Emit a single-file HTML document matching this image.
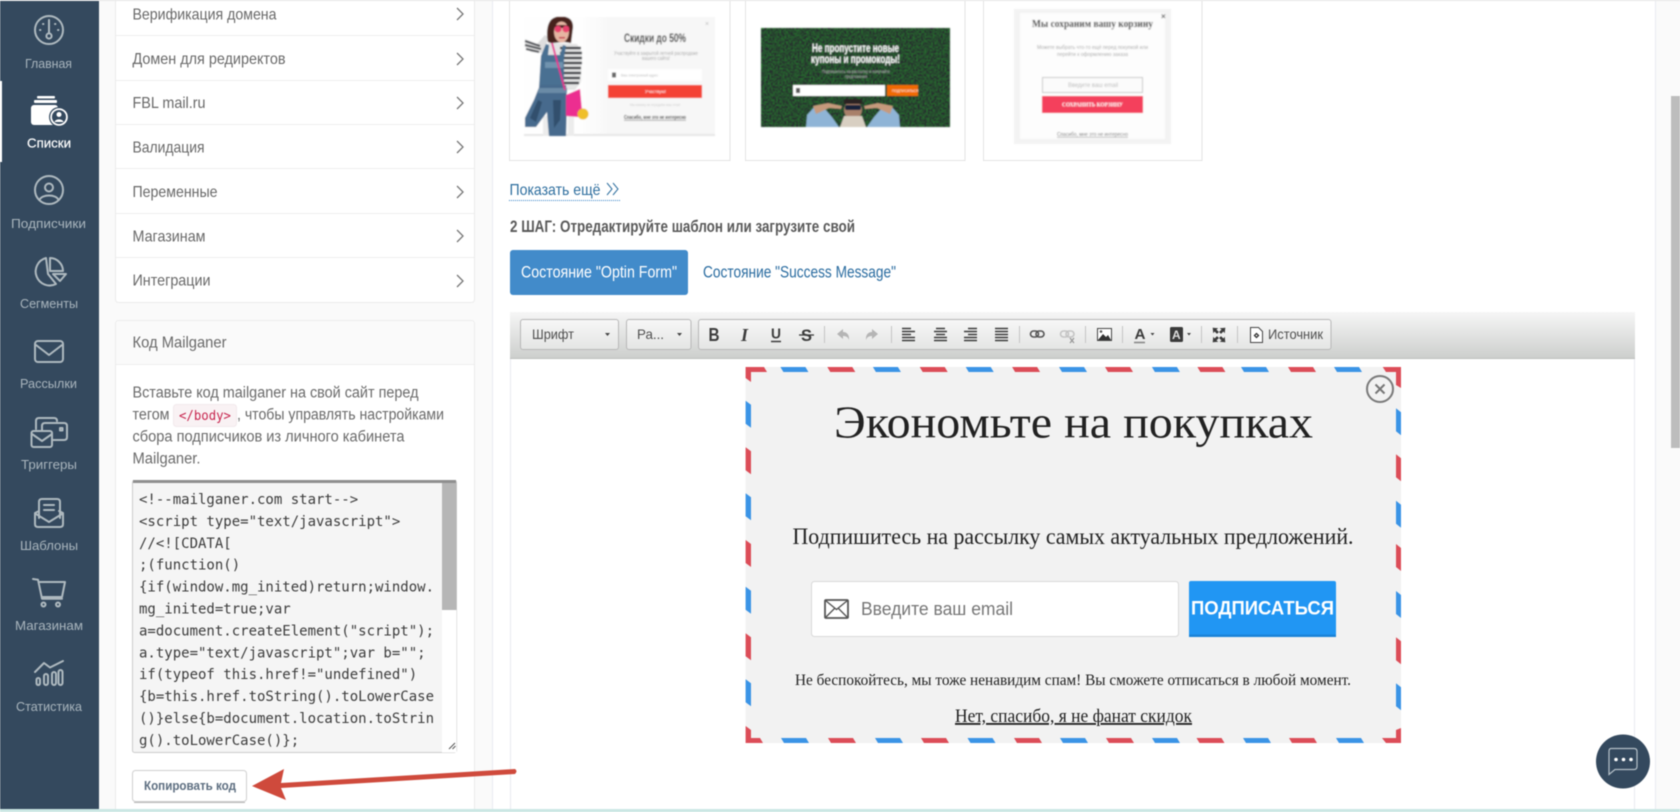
<!DOCTYPE html>
<html lang="ru">
<head>
<meta charset="utf-8">
<title>Mailganer</title>
<style>
html,body{margin:0;padding:0;width:1680px;height:812px;overflow:hidden;background:#fafafa}
svg{display:block;filter:blur(.4px)}
text{white-space:pre;font-family:"Liberation Sans",sans-serif}
.nav{font-size:13px;fill:#a9b5bd}
.row{font-size:16px;fill:#696969}
.txt{font-size:15.5px;fill:#6a6a6a}
.code{font-family:"DejaVu Sans Mono","Liberation Mono",monospace;font-size:14px;fill:#3c3c3c}
.tb{font-size:14px;fill:#4f4f4f}
.s{font-family:"Liberation Serif",serif;fill:#222}
.ic{fill:none;stroke:#aeb9bf;stroke-width:2;stroke-linecap:round;stroke-linejoin:round}
.chev{fill:none;stroke:#777;stroke-width:1.3}
.sep{stroke:#c4c4c4;stroke-width:1}
</style>
</head>
<body>
<svg xmlns="http://www.w3.org/2000/svg" width="1680" height="812" viewBox="0 0 1680 812">
<defs>
<linearGradient id="tbg" x1="0" y1="0" x2="0" y2="1"><stop offset="0" stop-color="#f6f6f6"/><stop offset="1" stop-color="#cdcfcd"/></linearGradient>
<linearGradient id="bg2" x1="0" y1="0" x2="0" y2="1"><stop offset="0" stop-color="#f7f7f7"/><stop offset="1" stop-color="#e4e5e4"/></linearGradient>
<linearGradient id="th1" x1="0" y1="0" x2="1" y2="0"><stop offset=".3" stop-color="#fefefe"/><stop offset=".45" stop-color="#f7f7f7"/></linearGradient>
<filter id="b1"><feGaussianBlur stdDeviation=".55"/></filter>
<filter id="grass" x="0" y="0" width="100%" height="100%"><feTurbulence type="fractalNoise" baseFrequency=".6" numOctaves="2" seed="4"/><feColorMatrix values="0 0 0 0 .06  0 0 0 1.600 -.62  0 0 0 0 .08  0 0 0 0 1"/></filter>
</defs>

<!-- backgrounds -->
<rect x="0" y="0" width="1680" height="812" fill="#fafafa"/>
<rect x="492" y="0" width="1163" height="812" fill="#fff"/>
<path d="M492.500 0V812M1655.500 0V812" stroke="#e9ebf0"/>
<rect x="1671" y="96" width="9" height="352" fill="#bdbdbd"/>

<!-- sidebar -->
<rect x="0" y="0" width="99" height="809" fill="#34495e"/>
<rect x="0" y="81" width="2" height="81" fill="#fff"/>

<!-- Главная -->
<g class="ic">
<circle cx="49" cy="30" r="14"/><circle cx="49" cy="36" r="2.600"/><path d="M49 20V33"/>
<path d="M40 30h.4M43 24h.4M55 24h.4M58 30h.4"/>
</g>
<text class="nav" x="25" y="68" textLength="47" lengthAdjust="spacingAndGlyphs">Главная</text>

<!-- Списки -->
<g fill="#fff">
<rect x="37" y="96" width="18" height="2.500" rx="1"/>
<rect x="34" y="100" width="23" height="3" rx="1"/>
<rect x="31" y="105" width="27" height="20" rx="3"/>
</g>
<circle cx="59" cy="117" r="10" fill="#34495e"/>
<circle cx="59" cy="117" r="8" fill="#fff" stroke="#fff" stroke-width="1.600"/>
<circle cx="59" cy="117" r="7" fill="#34495e"/>
<circle cx="59" cy="114.500" r="2.500" fill="#fff"/>
<path d="M54.500 122c1-3.500 8-3.500 9 0z" fill="#fff"/>
<text x="27" y="147.500" font-size="13" fill="#fff" stroke="#fff" stroke-width=".2" textLength="44" lengthAdjust="spacingAndGlyphs">Списки</text>

<!-- Подписчики -->
<g class="ic">
<circle cx="49" cy="190" r="14"/><circle cx="49" cy="187.500" r="4"/><path d="M39.500 200c2-6 17-6 19 0"/>
</g>
<text class="nav" x="11" y="228" textLength="75" lengthAdjust="spacingAndGlyphs">Подписчики</text>

<!-- Сегменты -->
<g class="ic">
<path d="M46 258a14 14 0 1 0 10 26l-8-10z"/>
<path d="M50 258c7 0 13 6 13 13H50z"/>
<path d="M53 274h13l-6 7z"/>
</g>
<text class="nav" x="20" y="308" textLength="58" lengthAdjust="spacingAndGlyphs">Сегменты</text>

<!-- Рассылки -->
<g class="ic">
<rect x="35" y="341" width="28" height="21" rx="3"/><path d="M36 345l13 10 13-10"/>
</g>
<text class="nav" x="20" y="388" textLength="57" lengthAdjust="spacingAndGlyphs">Рассылки</text>

<!-- Триггеры -->
<g class="ic" stroke-width="1.800">
<path d="M36 429v-8c0-2 1-3 3-3h15c2 0 3 1 3 3"/>
<path d="M42 430v-4c0-2 1-3 3-3h19c2 0 3 1 3 3v11c0 2-1 3-3 3H53"/>
<rect x="31.500" y="431" width="20.500" height="16" rx="2"/><path d="M32 434l10 7 10-7"/>
<rect x="60" y="428" width="2.500" height="2.500"/>
</g>
<text class="nav" x="21" y="469" textLength="56" lengthAdjust="spacingAndGlyphs">Триггеры</text>

<!-- Шаблоны -->
<g class="ic" stroke-width="1.800">
<path d="M39 518v-16c0-2 1-3 3-3h15c2 0 3 1 3 3v16"/>
<path d="M44 505h10M44 510h10"/>
<path d="M39 511l-4 2v11c0 2 1 3 3 3h22c2 0 3-1 3-3v-11l-4-2"/>
<path d="M36 514l13 8 13-8"/>
</g>
<text class="nav" x="20" y="550" textLength="58" lengthAdjust="spacingAndGlyphs">Шаблоны</text>

<!-- Магазинам -->
<g class="ic" stroke-width="1.800">
<path d="M33 579l5 .7 4 19h20"/>
<path d="M39 582h26l-3 15H42"/>
<circle cx="43.500" cy="604.500" r="2"/><circle cx="58" cy="604.500" r="2"/>
</g>
<text class="nav" x="15" y="630" textLength="68" lengthAdjust="spacingAndGlyphs">Магазинам</text>

<!-- Статистика -->
<g class="ic" stroke-width="1.800">
<path d="M35 672l9-9 6 4.500 13-6.500"/>
<rect x="36.500" y="678" width="3.500" height="7" rx="1.700"/>
<rect x="44" y="674" width="4" height="11" rx="2"/>
<rect x="52" y="672" width="4" height="13" rx="2"/>
<rect x="58.500" y="670" width="4" height="15" rx="2"/>
</g>
<text class="nav" x="16" y="711" textLength="66" lengthAdjust="spacingAndGlyphs">Статистика</text>

<!-- settings list -->
<rect x="115.500" y="-5" width="359" height="307.500" rx="3" fill="#fff" stroke="#ececec"/>
<path d="M116 35.500H474M116 80.500H474M116 124.500H474M116 168.500H474M116 213.500H474M116 257.500H474" stroke="#eeeeee"/>
<text class="row" x="132.500" y="19.700" textLength="144" lengthAdjust="spacingAndGlyphs">Верификация домена</text>
<text class="row" x="132.500" y="64" textLength="153" lengthAdjust="spacingAndGlyphs">Домен для редиректов</text>
<text class="row" x="132.500" y="108" textLength="73" lengthAdjust="spacingAndGlyphs">FBL mail.ru</text>
<text class="row" x="132.500" y="152.500" textLength="72" lengthAdjust="spacingAndGlyphs">Валидация</text>
<text class="row" x="132.500" y="197" textLength="85" lengthAdjust="spacingAndGlyphs">Переменные</text>
<text class="row" x="132.500" y="241.500" textLength="73" lengthAdjust="spacingAndGlyphs">Магазинам</text>
<text class="row" x="132.500" y="285.500" textLength="78" lengthAdjust="spacingAndGlyphs">Интеграции</text>
<path class="chev" d="M457 8l6 6-6 6M457 53l6 6-6 6M457 97l6 6-6 6M457 141l6 6-6 6M457 186l6 6-6 6M457 230l6 6-6 6M457 275l6 6-6 6"/>

<!-- Mailganer code card -->
<rect x="115.500" y="320.500" width="359" height="500" rx="3" fill="#fff" stroke="#ececec"/>
<path d="M116 364V324q0-3 3-3H471q3 0 3 3V364z" fill="#fafafa"/>
<path d="M116 364.500H474" stroke="#eeeeee"/>
<text class="row" x="132.500" y="347.500" textLength="94" lengthAdjust="spacingAndGlyphs">Код Mailganer</text>
<text class="txt" x="132.500" y="397.500" textLength="286" lengthAdjust="spacingAndGlyphs">Вставьте код mailganer на свой сайт перед</text>
<text class="txt" x="132.500" y="419.500" textLength="37" lengthAdjust="spacingAndGlyphs">тегом</text>
<rect x="173.500" y="404.500" width="63" height="22" rx="3" fill="#f9f2f4" stroke="#f2e9ec"/>
<text x="179" y="420" style="font-family:'DejaVu Sans Mono',monospace;font-size:13.500px;fill:#c7254e" textLength="52" lengthAdjust="spacingAndGlyphs">&lt;/body&gt;</text>
<text class="txt" x="237" y="419.500" textLength="207" lengthAdjust="spacingAndGlyphs">, чтобы управлять настройками</text>
<text class="txt" x="132.500" y="441.500" textLength="272" lengthAdjust="spacingAndGlyphs">сбора подписчиков из личного кабинета</text>
<text class="txt" x="132.500" y="463.500" textLength="68" lengthAdjust="spacingAndGlyphs">Mailganer.</text>

<rect x="132.500" y="480.500" width="324" height="272" rx="2" fill="#f5f5f5" stroke="#cccccc"/>
<rect x="133" y="480" width="323" height="3" fill="#8f8f8f"/>
<rect x="442" y="483" width="14.500" height="269" fill="#fff"/>
<rect x="442" y="483" width="14.500" height="127" fill="#b6b6b6"/>
<rect x="442" y="738" width="14.500" height="14.500" fill="#fff"/>
<path d="M449 749l6-6M452.500 749l3-3" stroke="#555" stroke-width="1"/>
<text class="code" x="139" y="504">&lt;!--mailganer.com start--&gt;</text>
<text class="code" x="139" y="526">&lt;script type="text/javascript"&gt;</text>
<text class="code" x="139" y="548">//&lt;![CDATA[</text>
<text class="code" x="139" y="569.500">;(function()</text>
<text class="code" x="139" y="591.500">{if(window.mg_inited)return;window.</text>
<text class="code" x="139" y="613.500">mg_inited=true;var</text>
<text class="code" x="139" y="635.500">a=document.createElement("script");</text>
<text class="code" x="139" y="657.500">a.type="text/javascript";var b="";</text>
<text class="code" x="139" y="679">if(typeof this.href!="undefined")</text>
<text class="code" x="139" y="701">{b=this.href.toString().toLowerCase</text>
<text class="code" x="139" y="723">()}else{b=document.location.toStrin</text>
<text class="code" x="139" y="745">g().toLowerCase()};</text>

<rect x="132.500" y="770.500" width="114" height="31" rx="3" fill="#fff" stroke="#cfcfcf" stroke-width="1"/>
<path d="M134 802.500H245" stroke="#b9b9b9"/>
<text x="144" y="790" font-size="13" font-weight="700" fill="#5d6e80" textLength="92" lengthAdjust="spacingAndGlyphs">Копировать код</text>

<!-- template cards -->
<rect x="509.500" y="-4" width="220.500" height="164.500" fill="#fff" stroke="#e3e3e3"/>
<rect x="745.500" y="-4" width="219.500" height="164.500" fill="#fff" stroke="#e3e3e3"/>
<rect x="983.500" y="-4" width="218.500" height="164.500" fill="#fff" stroke="#e3e3e3"/>

<!-- thumb 1 -->
<g filter="url(#b1)">
<rect x="524" y="17" width="191" height="119" fill="url(#th1)"/>
<rect x="524" y="134" width="191" height="2" fill="#e6e6e6"/>
<!-- stool -->
<path d="M543 116h8v20h-8zM568 116h6v20h-6z" fill="#ececec"/>
<!-- arm + top stripes -->
<path d="M525 39l12 5 8-9 4 3-7 15-11-1-6-5z" fill="#dedede"/>
<path d="M525 41l15 5M525 45l16 4M526 49l13 3" stroke="#33363d" stroke-width="1.800" fill="none"/>
<path d="M548 43l29 1 5 8-1 30-6 8h-27z" fill="#e4e4e4"/>
<path d="M560 48h21M560 53h22M560 58h22M560 63h22M560 68h21M560 73h21M560 78h20M562 83h17" stroke="#2e3138" stroke-width="2.200" fill="none"/>
<!-- overalls -->
<path d="M541 56l5-12 3 1-1 10h12l3-10 3 1-2 12v30h-25z" fill="#4a6f92"/>
<path d="M540 85h26l1 15-1 36h-17l-2-24-11 15h-11v-9l9-18z" fill="#466a8d"/>
<path d="M539 88h28v5h-29z" fill="#6b8ba6"/>
<path d="M530 118l8-18 4 2-6 20zM553 100l8 0-1 20-6 8z" fill="#33506d"/>
<path d="M545 62h18v6h-18z" fill="#6f93ae"/>
<!-- hair and face -->
<path d="M548 42c-2-10-1-24 9-25h8c6 1 8 5 8 10l-2 16-6-1-14 1z" fill="#46211e"/>
<ellipse cx="561.500" cy="32" rx="7.500" ry="10.500" fill="#e6b5a2"/>
<path d="M555 25h14l1 3h-15z" fill="#46211e"/>
<circle cx="558" cy="29" r="3.400" fill="#e9406d"/><circle cx="566" cy="29" r="3.400" fill="#e9406d"/>
<rect x="559" y="37" width="6" height="1.500" fill="#c4354f"/>
<!-- bag -->
<path d="M552 43l13 47" stroke="#e8338f" stroke-width="1.800" fill="none"/>
<path d="M566 95l14-6 2 22-3 6-13-1z" fill="#ec2f90"/>
<circle cx="583" cy="114" r="5.500" fill="#efbf2b"/>

<text x="624" y="42" font-size="12" font-weight="700" fill="#333" textLength="62" lengthAdjust="spacingAndGlyphs">Скидки до 50%</text>
<text x="614" y="55" font-size="5" fill="#aaa" textLength="84" lengthAdjust="spacingAndGlyphs">Участвуйте в закрытой летней распродаже</text>
<text x="642" y="60" font-size="5" fill="#aaa" textLength="28" lengthAdjust="spacingAndGlyphs">вашего сайта!</text>
<rect x="608" y="69" width="94" height="12" fill="#fff"/>
<rect x="612" y="72.500" width="4" height="5" fill="#666"/>
<text x="621" y="76.500" font-size="4" fill="#bbb" textLength="37" lengthAdjust="spacingAndGlyphs">Ваш электронный адрес</text>
<rect x="608" y="85" width="94" height="13" fill="#f44336"/>
<text x="645" y="93" font-size="4.500" fill="#fff" textLength="21" lengthAdjust="spacingAndGlyphs">Участвую!</text>
<text x="630" y="106" font-size="4" fill="#ccc" textLength="50" lengthAdjust="spacingAndGlyphs">Мы никому не передаём ваш email</text>
<text x="624" y="119" font-size="5.500" font-weight="700" fill="#444" text-decoration="underline" textLength="62" lengthAdjust="spacingAndGlyphs">Спасибо, мне это не интересно</text>
<text x="705" y="26" font-size="7" fill="#bbb">×</text>
</g>

<!-- thumb 2 -->
<g filter="url(#b1)">
<rect x="761" y="28" width="189" height="99" fill="#0e2e15"/>
<rect x="761" y="28" width="189" height="99" filter="url(#grass)" opacity=".45"/>
<text x="812" y="52" font-size="11.500" font-weight="700" fill="#fff" textLength="87" lengthAdjust="spacingAndGlyphs">Не пропустите новые</text>
<text x="811" y="63" font-size="11.500" font-weight="700" fill="#fff" textLength="89" lengthAdjust="spacingAndGlyphs">купоны и промокоды!</text>
<text x="822" y="73" font-size="4.500" fill="#bbb" textLength="68" lengthAdjust="spacingAndGlyphs">Подпишитесь на рассылку и получайте</text>
<text x="845" y="78" font-size="4.500" fill="#bbb" textLength="22" lengthAdjust="spacingAndGlyphs">предложения</text>
<rect x="793" y="85" width="92" height="11" fill="#fff"/>
<rect x="796" y="88" width="4" height="5" fill="#555"/>
<rect x="887" y="85" width="31" height="11" fill="#f06a00"/>
<text x="892" y="92" font-size="3.500" fill="#fff">ПОДПИСАТЬСЯ</text>
<path d="M806 127l1-12 8-9 10 3 7 8 7 10zM900 127l-1-12-8-9-10 3-7 8-7 10z" fill="#8fb4d6"/>
<path d="M813 106l15-3 14 3-1 3-12-1-13 6zM893 106l-15-3-14 3 1 3 12-1 13 6z" fill="#c69a7c"/>
<circle cx="853" cy="110" r="9" fill="#a8806a"/>
<path d="M845 99h16l2 5h-20z" fill="#2b2320"/>
<rect x="845" y="105" width="16" height="5" rx="2" fill="#15203a"/>
<path d="M840 127l4-11h18l4 11z" fill="#d8cfc2"/>
</g>

<!-- thumb 3 -->
<g filter="url(#b1)">
<rect x="1014" y="9" width="157" height="135" fill="#f3f3f3"/>
<rect x="1020" y="13" width="145" height="126" fill="#fdfdfd"/>
<text x="1032" y="27" style="font-family:'Liberation Serif',serif;font-size:10.500px;font-weight:700;fill:#333" textLength="121" lengthAdjust="spacingAndGlyphs">Мы сохраним вашу корзину</text>
<text x="1161" y="19" font-size="8" font-weight="700" fill="#555">×</text>
<text x="1037" y="49" font-size="5" fill="#aaa" textLength="111" lengthAdjust="spacingAndGlyphs">Можете выбрать что-то ещё перед покупкой или</text>
<text x="1057" y="56" font-size="5" fill="#aaa" textLength="71" lengthAdjust="spacingAndGlyphs">перейти к оформлению заказа</text>
<rect x="1042.500" y="77.500" width="100" height="15" fill="#fbfbfb" stroke="#c9c9c9"/>
<text x="1068" y="87" font-size="6" fill="#bbb" textLength="50" lengthAdjust="spacingAndGlyphs">Введите ваш email</text>
<rect x="1042" y="96" width="101" height="17" fill="#f4405c"/>
<text x="1062" y="106.500" style="font-family:'Liberation Serif',serif;font-size:6px;font-weight:700;fill:#fff" textLength="61" lengthAdjust="spacingAndGlyphs">СОХРАНИТЬ КОРЗИНУ</text>
<text x="1057" y="136" font-size="5.500" fill="#777" text-decoration="underline" textLength="71" lengthAdjust="spacingAndGlyphs">Спасибо, мне это не интересно</text>
</g>

<!-- show more -->
<text x="509.500" y="195" font-size="16" fill="#2f6f9f" textLength="91" lengthAdjust="spacingAndGlyphs">Показать ещё</text>
<path d="M607 183l5 6-5 6M613 183l5 6-5 6" fill="none" stroke="#2f6f9f" stroke-width="1"/>
<path d="M509 200.500H620" stroke="#3a85c9" stroke-width="1" stroke-dasharray="1 1"/>
<text x="510" y="232" font-size="16.500" font-weight="700" fill="#5a5a5a" textLength="345" lengthAdjust="spacingAndGlyphs">2 ШАГ: Отредактируйте шаблон или загрузите свой</text>

<!-- tabs -->
<rect x="510" y="250" width="178" height="45" rx="3" fill="#428bca"/>
<text x="521" y="277.500" font-size="16.500" fill="#fff" textLength="156" lengthAdjust="spacingAndGlyphs">Состояние "Optin Form"</text>
<text x="703" y="277.500" font-size="16.500" fill="#2a6ca0" textLength="193" lengthAdjust="spacingAndGlyphs">Состояние "Success Message"</text>

<!-- editor -->
<rect x="510.500" y="312.500" width="1124" height="510" fill="#fff" stroke="#e8eaf0"/>
<rect x="510" y="312" width="1125" height="46" fill="url(#tbg)"/>
<path d="M510 358.500H1635" stroke="#bdbfbd"/>
<rect x="520.500" y="319.500" width="98" height="30" rx="2.500" fill="url(#bg2)" stroke="#b7b7b7"/>
<rect x="626.500" y="319.500" width="64.500" height="30" rx="2.500" fill="url(#bg2)" stroke="#b7b7b7"/>
<rect x="698.500" y="319.500" width="632.500" height="30" rx="2.500" fill="url(#bg2)" stroke="#b7b7b7"/>
<text class="tb" x="532" y="339" textLength="42" lengthAdjust="spacingAndGlyphs">Шрифт</text>
<path d="M605 333h5l-2.500 3z" fill="#444"/>
<text class="tb" x="637" y="339" textLength="27" lengthAdjust="spacingAndGlyphs">Ра...</text>
<path d="M677 333h5l-2.500 3z" fill="#444"/>

<text x="708.500" y="341" font-size="18" font-weight="700" fill="#3c3c3c" textLength="11" lengthAdjust="spacingAndGlyphs">B</text>
<text x="741" y="341" style="font-family:'Liberation Serif',serif;font-size:18px;font-weight:700;font-style:italic;fill:#3c3c3c">I</text>
<text x="771" y="338.500" font-size="15" font-weight="700" fill="#3c3c3c" textLength="10" lengthAdjust="spacingAndGlyphs">U</text>
<path d="M771 341.500h10" stroke="#3c3c3c" stroke-width="1.500"/>
<text x="801" y="341" font-size="17" font-weight="700" fill="#3c3c3c" textLength="11" lengthAdjust="spacingAndGlyphs">S</text>
<path d="M799 335h15" stroke="#3c3c3c" stroke-width="1.300"/>
<path class="sep" d="M824.500 326V343M891.500 326V343M1019.500 326V343M1085.500 326V343M1122.500 326V343M1201.500 326V343M1237.500 326V343"/>
<path d="M843 329l-6 5 6 5v-3c3 0 5 1 6 4 .5-5-2-8-6-8z" fill="#b5b5b5"/>
<path d="M872 329l6 5-6 5v-3c-3 0-5 1-6 4-.5-5 2-8 6-8z" fill="#b5b5b5"/>
<path d="M902 328.500h9M902 331.500h13M902 334.500h9M902 337.500h13M902 340.500h13" stroke="#3c3c3c" stroke-width="1.600"/>
<path d="M936 328.500h9M934 331.500h13M936 334.500h9M934 337.500h13M934 340.500h13" stroke="#3c3c3c" stroke-width="1.600"/>
<path d="M968 328.500h9M964 331.500h13M968 334.500h9M964 337.500h13M964 340.500h13" stroke="#3c3c3c" stroke-width="1.600"/>
<path d="M995 328.500h13M995 331.500h13M995 334.500h13M995 337.500h13M995 340.500h13" stroke="#3c3c3c" stroke-width="1.600"/>
<g fill="none" stroke="#555" stroke-width="1.600"><rect x="1030.500" y="331" width="8" height="6" rx="3"/><rect x="1036" y="331" width="8" height="6" rx="3"/></g>
<g fill="none" stroke="#c4c4c4" stroke-width="1.600"><rect x="1060.500" y="331" width="8" height="6" rx="3"/><rect x="1066" y="331" width="8" height="6" rx="3"/></g>
<path d="M1070 338l4 5M1074 338l-4 5" stroke="#999" stroke-width="1.300"/>
<rect x="1097.500" y="328.500" width="14" height="12" fill="#fff" stroke="#444"/>
<path d="M1098 340l5-6 3 3 2-2 3 5z" fill="#333"/><circle cx="1101" cy="331.500" r="1.300" fill="#555"/>
<text x="1134.500" y="339" font-size="15" font-weight="700" fill="#3c3c3c" textLength="11" lengthAdjust="spacingAndGlyphs">A</text>
<path d="M1134 342.500h11" stroke="#888" stroke-width="1.600"/>
<path d="M1150.500 333h4l-2 2.500z" fill="#444"/>
<rect x="1170" y="327" width="13" height="15" rx="1.500" fill="#3a3a3a"/>
<text x="1172" y="339" font-size="12" font-weight="700" fill="#ddd">A</text>
<path d="M1187 333h4l-2 2.500z" fill="#444"/>
<path d="M1213 328l4.500.500-1.500 1 2.500 2.500-1.500 1.500-2.500-2.500-1 1.500zM1225 328l-4.500.500 1.500 1-2.500 2.500 1.500 1.500 2.500-2.500 1 1.500zM1213 342l4.500-.5-1.500-1 2.500-2.500-1.500-1.500-2.500 2.500-1-1.500zM1225 342l-4.500-.5 1.500-1-2.500-2.500 1.500-1.500 2.500 2.500 1-1.500z" fill="#3c3c3c" stroke="#3c3c3c" stroke-width=".6"/>
<path d="M1250.500 327.500h8l4 4v11h-12z" fill="#fff" stroke="#444"/>
<path d="M1254.500 335.500l2-2 2 2-2 2z" fill="none" stroke="#333" stroke-width="1.300"/>
<text class="tb" x="1268" y="339" textLength="55" lengthAdjust="spacingAndGlyphs">Источник</text>

<!-- popup -->
<rect x="745.600" y="367" width="655.400" height="376" fill="#f2f2f2"/>
<path fill="#dc4d58" d="M745.600 367H764l3 5H751V382l-5.400-4z
M745.600 726l5.400 4V738H760l3 5H745.600z
M1382.700 367H1401V388l-5-3V372H1386z
M1382 738H1396V730l5-2V743H1386z
M827.300 367h25l3 5h-25zM919.700 367h25l3 5h-25zM1012.100 367h25l3 5h-25zM1105 367h25l3 5h-25zM1197.400 367h25l3 5h-25zM1288 367h25l3 5h-25z
M828 738h25l3 5h-25zM921 738h25l3 5h-25zM1014 738h25l3 5h-25zM1106 738h25l3 5h-25zM1196.500 738h25l3 5h-25zM1289 738h25l3 5h-25z
M745.600 447.300v23l5.400 4v-23zM745.600 540v23l5.400 4v-23zM745.600 633.300v23l5.400 4v-23z
M1396 454.300v23l5 4v-23zM1396 544v23l5 4v-23zM1396 637.300v23l5 4v-23z"/>
<path fill="#3b94e6" d="M780.400 367h25l3 5h-25zM872.900 367h25l3 5h-25zM965.700 367h25l3 5h-25zM1059 367h25l3 5h-25zM1151.900 367h25l3 5h-25zM1241 367h25l3 5h-25zM1334 367h25l3 5h-25z
M781 738h25l3 5h-25zM875 738h25l3 5h-25zM967.500 738h25l3 5h-25zM1060 738h25l3 5h-25zM1152 738h25l3 5h-25zM1243 738h25l3 5h-25zM1336 738h25l3 5h-25z
M745.600 400.700v23l5.400 4v-23zM745.600 493.300v23l5.400 4v-23zM745.600 586.700v23l5.400 4v-23zM745.600 679.300v23l5.400 4v-23z
M1396 408.300v23l5 4v-23zM1396 500.700v23l5 4v-23zM1396 591v23l5 4v-23zM1396 683.300v23l5 4v-23z"/>
<circle cx="1380" cy="389" r="13" fill="#f2f2f2" stroke="#7a7a7a" stroke-width="2"/>
<path d="M1375.500 384.500l9 9M1384.500 384.500l-9 9" stroke="#777" stroke-width="2"/>
<text class="s" x="834" y="437.500" font-size="46" textLength="479" lengthAdjust="spacingAndGlyphs">Экономьте на покупках</text>
<text class="s" x="792.500" y="544" font-size="23" textLength="561" lengthAdjust="spacingAndGlyphs">Подпишитесь на рассылку самых актуальных предложений.</text>
<rect x="811.500" y="581.500" width="367" height="55" rx="3" fill="#fff" stroke="#d9d9d9"/>
<rect x="825" y="600" width="23" height="18" rx="1" fill="none" stroke="#555" stroke-width="1.800"/>
<path d="M825.500 600.500l11 9 11-9M825.500 617.500l9-9M847.500 617.500l-9-9" fill="none" stroke="#555" stroke-width="1.400"/>
<text x="861" y="615" font-size="18.500" fill="#767676" textLength="152" lengthAdjust="spacingAndGlyphs">Введите ваш email</text>
<rect x="1189" y="581" width="147" height="56" rx="2" fill="#2196f3"/>
<rect x="1189" y="634.500" width="147" height="2.500" fill="#1b84d8"/>
<text x="1191" y="614.500" font-size="19.500" font-weight="700" fill="#fff" textLength="143" lengthAdjust="spacingAndGlyphs">ПОДПИСАТЬСЯ</text>
<text class="s" x="795" y="685" font-size="15.500" textLength="556" lengthAdjust="spacingAndGlyphs">Не беспокойтесь, мы тоже ненавидим спам! Вы сможете отписаться в любой момент.</text>
<text class="s" x="955" y="722" font-size="18.500" text-decoration="underline" textLength="237" lengthAdjust="spacingAndGlyphs">Нет, спасибо, я не фанат скидок</text>

<!-- arrow (above editor and columns) -->
<path d="M252 786L284 769 281 783 515 769Q518 771 515 774L281 788 286 800z" fill="#cf4a3c"/>

<!-- chat bubble -->
<circle cx="1623" cy="761.500" r="27" fill="#34495e"/>
<path d="M1611 748.500h23q3 0 3 3v15q0 3-3 3h-19l-6 5v-23q0-3 2-3z" fill="none" stroke="#b5c0c8" stroke-width="1.200"/>
<circle cx="1616" cy="759.500" r="1.800" fill="#fff"/><circle cx="1623.500" cy="759.500" r="1.800" fill="#fff"/><circle cx="1631" cy="759.500" r="1.800" fill="#fff"/>

<!-- page edges -->
<rect x="0" y="0" width="1680" height="1" fill="#e6e6e6"/>
<rect x="0" y="809" width="1680" height="3" fill="#cbe7e4"/>
</svg>
</body>
</html>
